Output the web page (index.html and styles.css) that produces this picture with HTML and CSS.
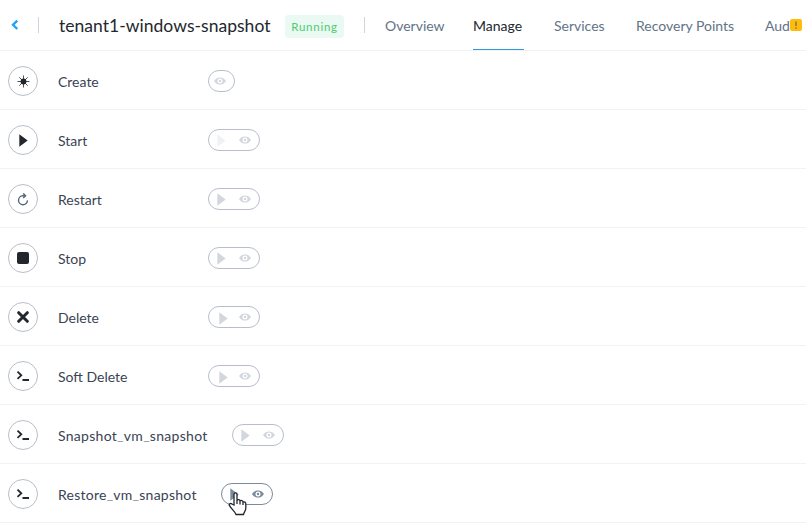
FILE: index.html
```html
<!DOCTYPE html>
<html lang="en">
<head>
<meta charset="utf-8">
<title>tenant1-windows-snapshot</title>
<link rel="stylesheet" href="styles.css">
</head>
<body>
<svg class="defs" width="0" height="0" aria-hidden="true">
  <symbol id="eye" viewBox="0 0 12 8"><path fill-rule="evenodd" d="M0 4C1.6 1.5 3.5.4 6 .4S10.400 1.500 12 4C10.400 6.500 8.500 7.600 6 7.600S1.600 6.500 0 4ZM6 1.500a2.500 2.500 0 1 0 0 5a2.500 2.500 0 1 0 0-5ZM6 2.800a1.200 1.200 0 1 1 0 2.400a1.200 1.200 0 1 1 0-2.400Z"/></symbol>
  <symbol id="play" viewBox="0 0 9 13"><path d="M.3.300 8.700 6.500.3 12.700Z"/></symbol>
  <symbol id="term" viewBox="0 0 14 12"><path d="M1.500 1.700 5.300 5.300 1.500 8.900M6.500 10H13" fill="none" stroke="#22272e" stroke-width="1.800"/></symbol>
</svg>
<header class="top">
  <svg class="back" width="8" height="12" viewBox="0 0 8 12"><path d="M6.300 1.600 2 5.800 6.300 10"/></svg>
  <i class="sep"></i>
  <h1>tenant1-windows-snapshot</h1>
  <span class="status">Running</span>
  <i class="sep second"></i>
  <nav>
    <a class="overview">Overview</a>
    <a class="manage active">Manage</a>
    <a class="services">Services</a>
    <a class="points">Recovery Points</a>
    <a class="audit">Aud<span class="alert"><svg width="12" height="12" viewBox="0 0 12 12"><path d="M6 2.500V7M6 8.200V9.700"/></svg></span></a>
  </nav>
</header>
<main>
  <section class="row"><span class="circle"><svg width="13" height="13" viewBox="0 0 13 13"><g stroke="#22272e" fill="none"><path d="M6.500.5v12M.5 6.500h12M2.300 2.300l8.400 8.400M10.700 2.300l-8.400 8.400" stroke-width=".8"/></g><circle cx="6.500" cy="6.500" r="2.900" fill="#22272e"/></svg></span><span class="label create">Create</span><span class="pill single"><svg class="eye"><use href="#eye"/></svg></span></section>
  <section class="row"><span class="circle"><svg class="go" width="9" height="13"><use href="#play"/></svg></span><span class="label start">Start</span><span class="pill faint"><svg class="play"><use href="#play"/></svg><svg class="eye"><use href="#eye"/></svg></span></section>
  <section class="row"><span class="circle"><svg width="12" height="13" viewBox="0 0 12 13"><path d="M7.500 2.700H5.800A4.500 4.500 0 1 0 10.500 7.400M6.200.4 8.600 2.700 6.200 5" fill="none" stroke="#56697c" stroke-width="1.400"/></svg></span><span class="label restart">Restart</span><span class="pill"><svg class="play"><use href="#play"/></svg><svg class="eye"><use href="#eye"/></svg></span></section>
  <section class="row"><span class="circle"><i class="stopicon"></i></span><span class="label stop">Stop</span><span class="pill"><svg class="play"><use href="#play"/></svg><svg class="eye"><use href="#eye"/></svg></span></section>
  <section class="row"><span class="circle"><svg width="12" height="12" viewBox="0 0 12 12"><path d="M1.700 1.700 10.300 10.300M10.300 1.700 1.700 10.300" stroke="#22272e" stroke-width="3" stroke-linecap="round"/></svg></span><span class="label delete">Delete</span><span class="pill shifted"><svg class="play"><use href="#play"/></svg><svg class="eye"><use href="#eye"/></svg></span></section>
  <section class="row"><span class="circle"><svg width="14" height="12"><use href="#term"/></svg></span><span class="label soft">Soft Delete</span><span class="pill shifted"><svg class="play"><use href="#play"/></svg><svg class="eye"><use href="#eye"/></svg></span></section>
  <section class="row"><span class="circle"><svg width="14" height="12"><use href="#term"/></svg></span><span class="label snap">Snapshot<u>_</u>vm<u>_</u>snapshot</span><span class="pill"><svg class="play"><use href="#play"/></svg><svg class="eye"><use href="#eye"/></svg></span></section>
  <section class="row"><span class="circle"><svg width="14" height="12"><use href="#term"/></svg></span><span class="label restore">Restore<u>_</u>vm<u>_</u>snapshot</span><span class="pill hover"><svg class="play"><use href="#play"/></svg><svg class="eye"><use href="#eye"/></svg><svg class="cursor" width="19" height="24" viewBox="0 0 19 24"><path d="M6 13V2.500C6 .4 9 .4 9 2.500V8.300C10 7 12 7.500 12 9 13 8 15 8.500 15 10 16.500 9.500 17.800 10.200 17.800 11.800V16C17.800 19 16 20 15.500 22.500H8C7 19.500 3.500 17 1.500 13.700.5 12 2.500 10.800 4 12ZM9 8.300V12M12 9V12.500M15 10V13"/></svg></span></section>
</main>
</body>
</html>
```
FILE: styles.css
```css
* { box-sizing: border-box; }
body { margin: 0; background: #fff; color: #3a4354; font: 14px/20px Lato, "Open Sans", sans-serif; overflow: hidden; }
svg { display: block; flex: none; }
.defs { position: absolute; }
.top { display: flex; height: 51px; border-bottom: 1px solid #f1f2f4; padding-left: 11px; white-space: nowrap; }
.back { margin-top: 19px; fill: none; stroke: #22a5f7; stroke-width: 2.4; }
.sep { flex: none; width: 1px; height: 16px; margin: 17px 0 0 19px; background: #cfd5dc; }
h1 { flex: none; width: 211px; margin: 14px 0 0 20px; font-size: 17.5px; line-height: 24px; font-weight: 400; color: #22272e; letter-spacing: .03px; }
.status { flex: none; width: 59px; height: 23px; margin: 15px 0 0 15px; border-radius: 4px; background: #eaf9f1; color: #4ccb72; font-size: 11.5px; line-height: 24px; text-align: center; letter-spacing: .75px; }
.sep.second { margin-left: 20px; }
nav { display: flex; margin-left: 20px; color: #627386; line-height: 22px; }
nav a { flex: none; height: 50px; padding-top: 15px; }
.overview { width: 88px; }
.manage { width: 51px; }
.active { color: #22272e; border-bottom: 1px solid #3299e0; }
.services { width: 52px; margin-left: 30px; }
.points { width: 99px; margin-left: 30px; }
.audit { position: relative; margin-left: 30px; }
.alert { position: absolute; left: 25px; top: 19px; width: 12px; height: 12px; border-radius: 2px; background: #ffbd0a; }
.alert path { stroke: #797768; stroke-width: 1.500; }
.row { display: flex; height: 59px; padding: 15px 0 0 8px; border-bottom: 1px solid #f1f2f4; }
.circle { display: flex; flex: none; width: 30px; height: 30px; align-items: center; justify-content: center; border: 1px solid #b8bfca; border-radius: 50%; }
.go { fill: #22272e; margin-left: 1px; }
.stopicon { width: 12px; height: 12px; border-radius: 2px; background: #22272e; }
.label { flex: none; width: 150px; height: 23px; margin: 4px 0 0 20px; line-height: 23px; white-space: nowrap; }
.label u { position: relative; top: -1px; text-decoration: none; color: #8e959f; }
.snap { width: 174px; letter-spacing: .29px; }
.restore { width: 163px; letter-spacing: .25px; }
.pill { position: relative; display: flex; flex: none; width: 52px; height: 22px; margin-top: 4px; padding: 4px 0 0 8px; border: 1px solid #b8bfcb; border-radius: 11px; fill: #d2d6dd; }
.play { width: 9px; height: 13px; }
.eye { width: 12px; height: 8px; margin: 1.5px 0 0 13px; }
.single { width: 27px; padding-left: 5px; }
.single .eye { margin-left: 0; }
.faint .play { fill: #eff1f4; }
.shifted { padding-left: 10px; }
.shifted .play { margin-top: 1px; }
.shifted .eye { margin-left: 11px; }
.hover { border-color: #7b8b9d; fill: #7b8b9d; }
.cursor { position: absolute; left: 6px; top: 8px; fill: #fff; stroke: #22252f; stroke-width: 1.300; }
```
